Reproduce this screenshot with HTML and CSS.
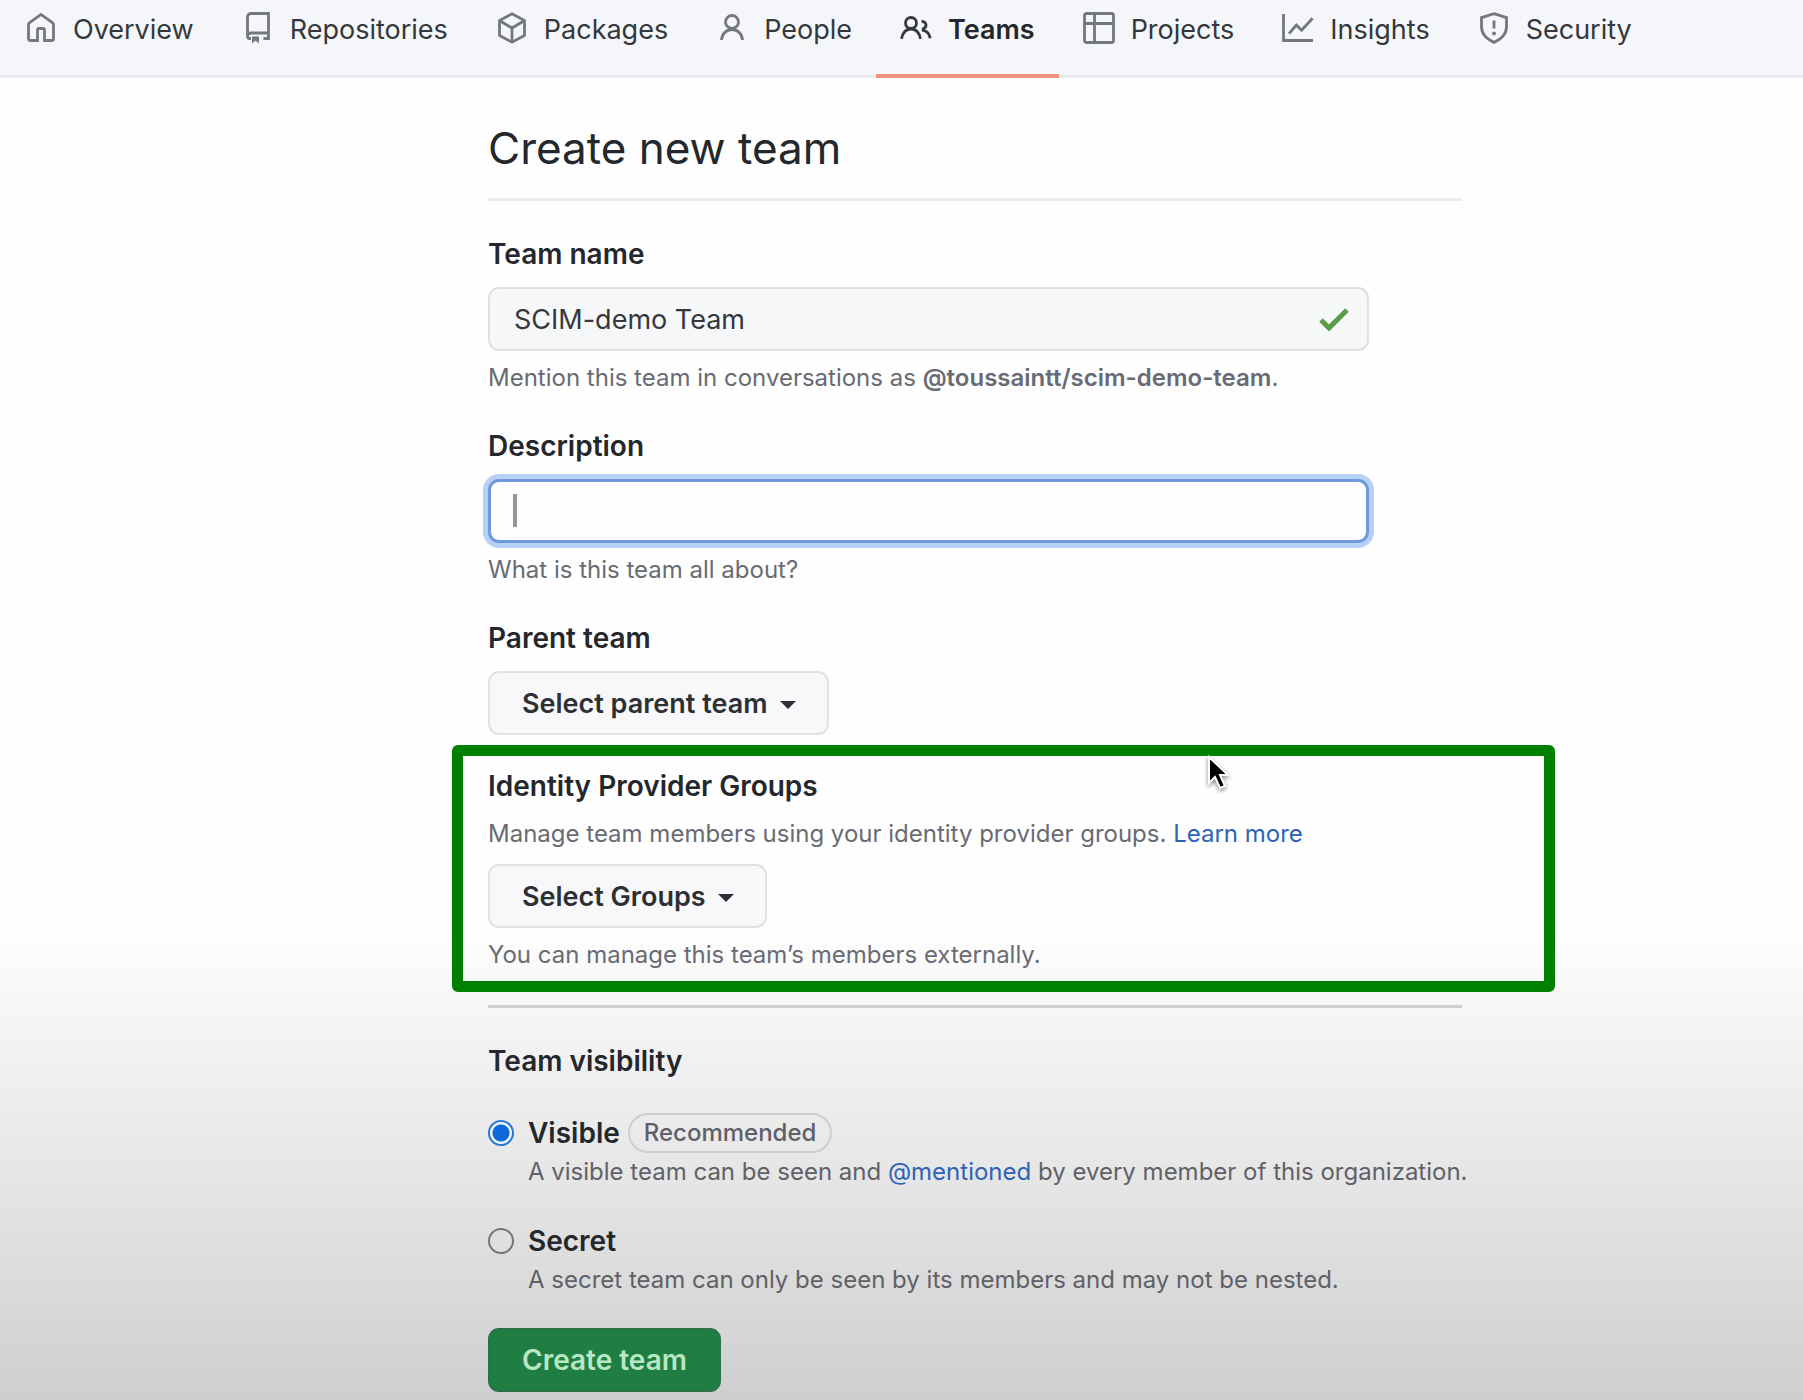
FILE: index.html
```
<!DOCTYPE html>
<html lang="en">
	<head>
		<meta charset="utf-8" />
		<meta name="viewport" content="width=device-width, initial-scale=1">
		<title>Create new team</title>
		<link rel="stylesheet" href="styles.css">
	</head>
	<body>
		<nav class="nav">
			<a href="#">
				<svg viewBox="0 0 16 16"><path d="M1.75 6.2v7.05c0 .55.45 1 1 1h3.5V9c0-.4.3-.75.75-.75h2c.4 0 .75.35.75.75v5.25h3.5c.55 0 1-.45 1-1V6.2c0-.3-.14-.6-.38-.78L8 1.2 2.13 5.42c-.24.18-.38.48-.38.78z"/></svg>
				Overview
			</a>
			<a href="#">
				<svg viewBox="0 0 16 16"><path d="M4.5 13.25h-.75a1 1 0 0 1-1-1V2.5c0-.97.78-1.75 1.75-1.75h8.75v12.5h-2.5M2.75 12.25c0-.97.78-1.75 1.75-1.75h8.75"/><path class="fill" d="M5 12.25h3.5v3.4l-1.75-1.3L5 15.65z"/></svg>
				Repositories
			</a>
			<a href="#">
				<svg viewBox="0 0 16 16"><path d="M8 .9l6.25 3.4v7.4L8 15.1l-6.25-3.4V4.3zM1.9 4.4L8 8l6.1-3.6M8 8v7"/></svg>
				Packages
			</a>
			<a href="#">
				<svg viewBox="0 0 16 16"><circle cx="8" cy="5" r="3.25"/><path d="M2.75 14c.2-3 2.3-5.25 5.25-5.25S13.05 11 13.25 14"/></svg>
				People
			</a>
			<a href="#" class="active">
				<svg viewBox="0 0 16 16"><circle cx="5.5" cy="5.5" r="2.75"/><path d="M.8 13.4c.3-2.8 2.2-4.9 4.7-4.9s4.4 2.1 4.7 4.9M10.8 4.75c1.2-.1 2.2.6 2.2 1.75 0 1-.7 1.6-1.4 1.9v.8c1.8.3 3.1 1.8 3.5 3.9"/></svg>
				Teams
			</a>
			<a href="#">
				<svg viewBox="0 0 16 16"><rect x=".75" y=".75" width="14.5" height="14.5" rx="1"/><path d="M1 5.75h14M5.75 1v14"/></svg>
				Projects
			</a>
			<a href="#">
				<svg viewBox="0 0 16 16"><path d="M.75 1v13.25H15.5M3.5 10.8l3.7-4.3 2.6 2.6 5.5-6"/></svg>
				Insights
			</a>
			<a href="#">
				<svg viewBox="0 0 16 16"><path d="M8 .8l6.25 2v4.6c0 3.5-2.4 6.1-6.25 7.8-3.85-1.7-6.25-4.3-6.25-7.8V2.8zM8 4.2v4"/><circle class="fill" cx="8" cy="10.8" r="1"/></svg>
				Security
			</a>
		</nav>

		<form class="team">
			<h1>Create new team</h1>

			<div class="group">
				<label class="title" for="name">Team name</label>
				<div class="field">
					<input type="text" id="name" value="SCIM-demo Team" />
					<svg class="check" viewBox="0 0 30 24"><path d="M2 13l8 8L28 3"/></svg>
				</div>
				<p class="help">Mention this team in conversations as <strong>@toussaintt/scim-demo-team</strong>.</p>
			</div>

			<div class="group">
				<label class="title" for="desc">Description</label>
				<div class="field">
					<input type="text" id="desc" class="focus" value="" />
					<span class="cursor"></span>
				</div>
				<p class="help">What is this team all about?</p>
			</div>

			<div class="group">
				<label class="title" for="parent">Parent team</label>
				<div class="select">
					<select id="parent"><option>Select parent team</option></select>
					<svg viewBox="0 0 16 8"><path d="M0 0h16L8 8z"/></svg>
				</div>
			</div>

			<div class="group idp">
				<label class="title" for="groups">Identity Provider Groups</label>
				<p class="help">Manage team members using your identity provider groups. <a href="#">Learn more</a></p>
				<div class="select">
					<select id="groups"><option>Select Groups</option></select>
					<svg viewBox="0 0 16 8"><path d="M0 0h16L8 8z"/></svg>
				</div>
				<p class="help">You can manage this team’s members externally.</p>
				<div class="highlight"></div>
				<svg class="pointer" viewBox="0 0 22 36"><path d="M2 2v26l6-6 5 11 5-2-5-11h8z"/></svg>
			</div>

			<hr>

			<h2 class="title">Team visibility</h2>

			<div class="group radio">
				<input type="radio" name="visibility" id="visible" checked />
				<div>
					<div class="line">
						<label class="title" for="visible">Visible</label>
						<span class="badge">Recommended</span>
					</div>
					<p class="help">A visible team can be seen and <a href="#">@mentioned</a> by every member of this organization.</p>
				</div>
			</div>

			<div class="group radio">
				<input type="radio" name="visibility" id="secret" />
				<div>
					<label class="title" for="secret">Secret</label>
					<p class="help">A secret team can only be seen by its members and may not be nested.</p>
				</div>
			</div>

			<button type="button" class="create">Create team</button>
		</form>
	</body>
</html>
```
FILE: styles.css
```
*{
	box-sizing: border-box;
}
body{
	margin: 0;
	min-height: 100vh;
	font-family: Inter, "Liberation Sans", sans-serif;
	font-size: 27px;
	color: #24272c;
	background: linear-gradient(#fefefe 66%, #f3f3f4 74%, #e3e3e3 86%, #cecece 100%);
}
h1,h2,p{
	margin: 0;
}
a{
	color: #2c63b8;
	text-decoration: none;
}

/* top tabs */
.nav{
	display: flex;
	height: 78px;
	padding-left: 1px;
	background: #f5f6f9;
	box-shadow: inset 0 -3px #e7e9ec;
	overflow: hidden;
}
.nav a{
	display: flex;
	flex-shrink: 0;
	gap: 16px;
	height: 78px;
	padding: 8px 24px 0;
	line-height: 43px;
	color: #34373c;
}
.nav svg{
	width: 32px;
	height: 32px;
	margin-top: 4px;
	fill: none;
	stroke: #74777e;
	stroke-width: 1.4;
}
.nav .fill{
	fill: #74777e;
	stroke: none;
}
.nav .active{
	font-weight: 600;
	color: #24272c;
	border-bottom: 4px solid #f2917f;
}
.nav .active svg{
	stroke: #34373c;
}

/* form */
.team{
	max-width: 1462px;
	padding: 34px 0 10px 488px;
}
h1{
	margin-bottom: 32px;
	padding-bottom: 14px;
	border-bottom: 3px solid #ededf0;
	font-size: 44px;
	line-height: 72px;
	font-weight: 400;
}
.group{
	margin-bottom: 29px;
}
.title{
	display: block;
	font-size: 28px;
	line-height: 42px;
	font-weight: 600;
}
.help{
	margin-top: 9px;
	font-size: 24px;
	line-height: 36px;
	color: #686b74;
	white-space: nowrap;
}
.help strong{
	font-weight: 600;
}
.field{
	position: relative;
	max-width: 881px;
	margin-top: 12px;
}
.field input{
	display: block;
	width: 100%;
	height: 64px;
	padding: 0 24px;
	font: inherit;
	color: #34373c;
	background: #f6f7f9;
	border: 2px solid #dfe0e4;
	border-radius: 11px;
	outline: none;
}
.field .focus{
	background: #fefefe;
	border: 3px solid #6f99d8;
	box-shadow: 0 0 0 5px #b7d1f6;
}
.check{
	position: absolute;
	right: 19px;
	top: 20px;
	width: 32px;
	height: 24px;
	fill: none;
	stroke: #5a9c48;
	stroke-width: 5;
}
.cursor{
	position: absolute;
	left: 25px;
	top: 15px;
	width: 4px;
	height: 33px;
	background: #97979b;
}
.select{
	position: relative;
	width: fit-content;
	margin-top: 12px;
}
.select select{
	appearance: none;
	display: block;
	height: 64px;
	padding: 0 59px 0 32px;
	font: inherit;
	font-weight: 600;
	color: #2c2f34;
	background: #f8f8fa;
	border: 2px solid #e2e2e6;
	border-radius: 11px;
}
.select svg{
	position: absolute;
	right: 33px;
	top: 30px;
	width: 16px;
	height: 8px;
	fill: #2c2f34;
	pointer-events: none;
}
.idp{
	position: relative;
	margin: 30px 0 32px;
}
.highlight{
	position: absolute;
	top: -20px;
	right: -93px;
	bottom: -19px;
	left: -36px;
	border: 11px solid #008000;
	border-radius: 6px;
	pointer-events: none;
}
.pointer{
	position: absolute;
	left: 719px;
	top: -10px;
	width: 22px;
	height: 36px;
	fill: #000;
	stroke: #fff;
	stroke-width: 2;
	filter: drop-shadow(0 2px 2px #888);
	pointer-events: none;
}
hr{
	height: 3px;
	margin: 0 0 32px;
	border: 0;
	background: #cfcdd1;
}
.radio{
	display: flex;
	gap: 14px;
	margin: 30px 0;
}
.radio input{
	appearance: none;
	flex-shrink: 0;
	width: 26px;
	height: 26px;
	margin: 8px 0 0;
	background: #ececec;
	border: 2px solid #77777a;
	border-radius: 50%;
}
.radio input:checked{
	background: radial-gradient(circle, #0d68d8 8px, #eef5fc 9px);
	border-color: #2a77d6;
}
#secret{
	background: transparent;
}
.radio .help{
	margin-top: 0;
	color: #5f6167;
}
.line{
	display: flex;
	align-items: center;
	gap: 8px;
}
.badge{
	padding: 0 14px;
	font-size: 24px;
	line-height: 36px;
	font-weight: 500;
	color: #5f5f69;
	border: 2px solid #cdcdd2;
	border-radius: 20px;
}
.create{
	display: block;
	height: 64px;
	padding: 0 32px;
	font: inherit;
	font-size: 28px;
	font-weight: 600;
	color: #b9e6c6;
	background: #1f7f43;
	border: 2px solid #2a7347;
	border-radius: 11px;
}
```
